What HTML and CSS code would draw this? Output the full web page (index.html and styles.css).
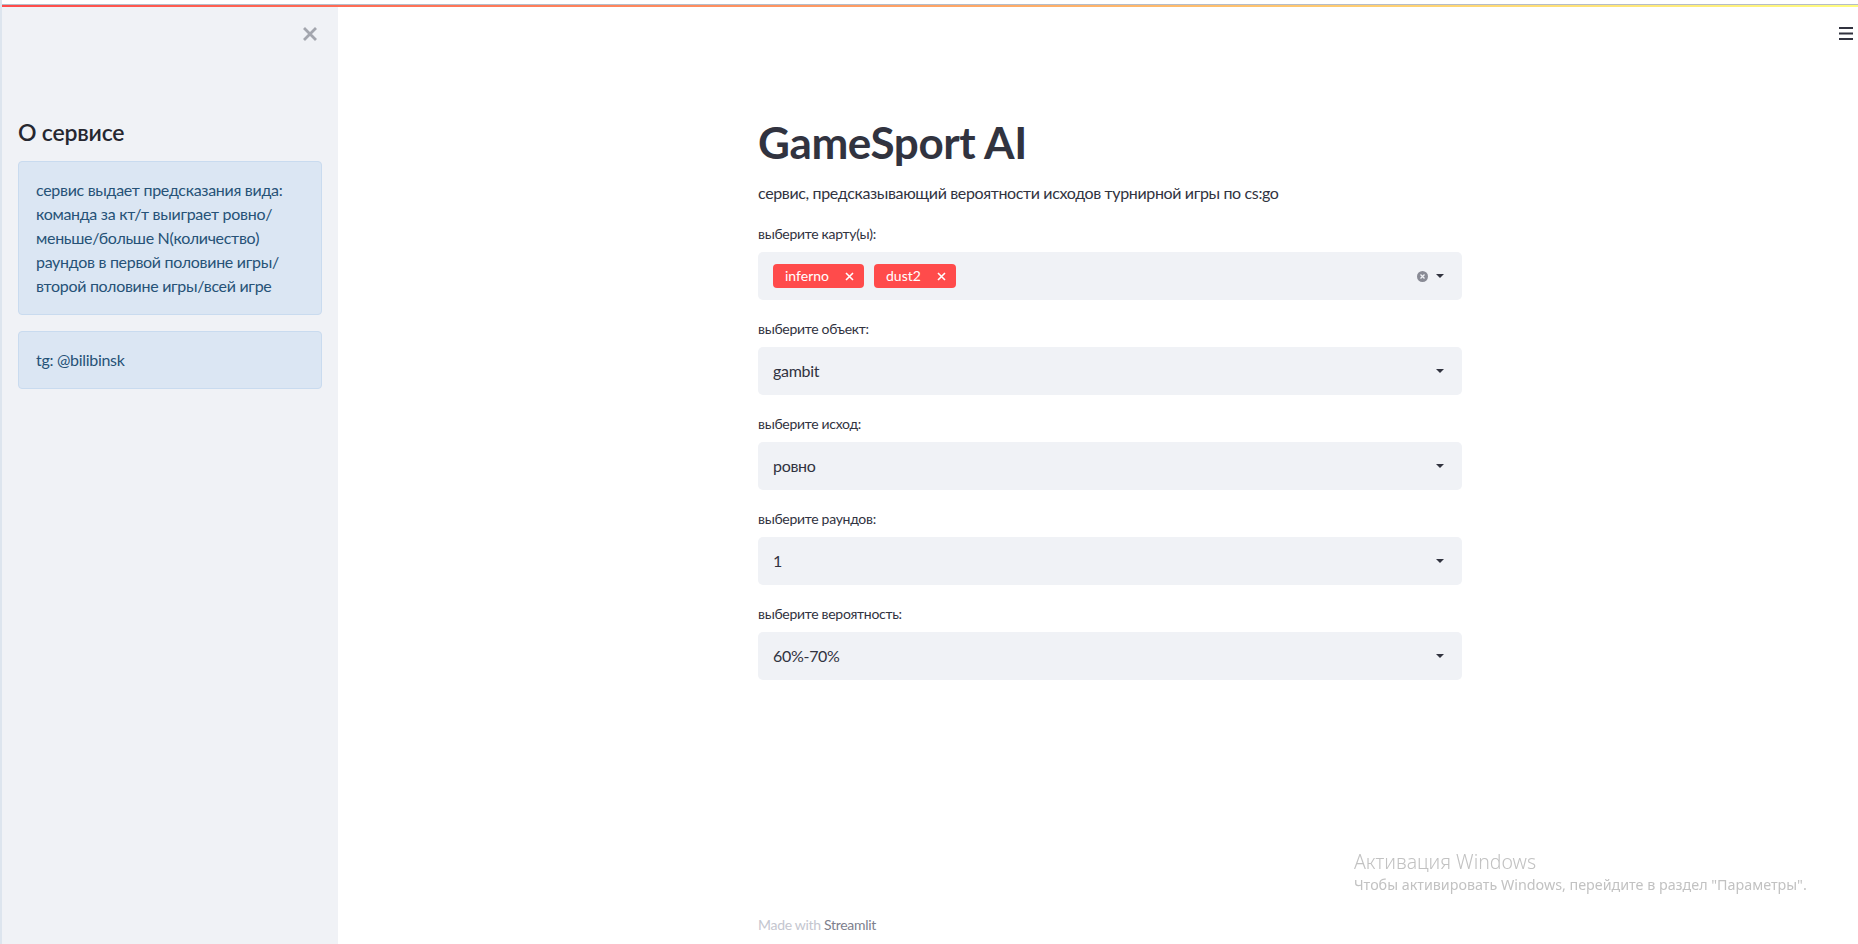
FILE: index.html
```html
<!DOCTYPE html>
<html lang="ru">
<head>
<meta charset="utf-8">
<title>GameSport AI</title>
<link rel="stylesheet" href="styles.css">
</head>
<body>
<div class="edge"></div>
<div class="page">
  <div class="chrome-top"></div>
  <div class="chrome-line"></div>
  <div class="decoration"></div>
  <div class="app">
    <aside class="sidebar">
      <div class="sb-top">
        <span class="close-btn">
          <svg width="14" height="14" viewBox="0 0 14 14"><path d="M2 2 L12 12 M12 2 L2 12" stroke="#a3a6ae" stroke-width="2.8" stroke-linecap="square"/></svg>
        </span>
      </div>
      <h2 class="sb-title">О сервисе</h2>
      <div class="info">сервис выдает предсказания вида: команда за кт/т выиграет ровно/ меньше/больше N(количество) раундов в первой половине игры/ второй половине игры/всей игре</div>
      <div class="info">tg: @bilibinsk</div>
    </aside>
    <main class="main">
      <header class="header">
        <span class="burger">
          <svg width="14" height="13" viewBox="0 0 14 13"><rect x="0" y="0" width="14" height="2" fill="#31333f"/><rect x="0" y="5.5" width="14" height="2" fill="#31333f"/><rect x="0" y="11" width="14" height="2" fill="#31333f"/></svg>
        </span>
      </header>
      <div class="block">
        <h1 class="title">GameSport AI</h1>
        <p class="sub">сервис, предсказывающий вероятности исходов турнирной игры по cs:go</p>

        <div class="widget">
          <label class="wlabel">выберите карту(ы):</label>
          <div class="select">
            <div class="value tags">
              <span class="tag">inferno<svg class="tag-x" width="9" height="9" viewBox="0 0 9 9"><path d="M1 1 L8 8 M8 1 L1 8" stroke="#ffffff" stroke-width="1.6"/></svg></span>
              <span class="tag">dust2<svg class="tag-x" width="9" height="9" viewBox="0 0 9 9"><path d="M1 1 L8 8 M8 1 L1 8" stroke="#ffffff" stroke-width="1.6"/></svg></span>
            </div>
            <span class="clear">
              <svg width="11" height="11" viewBox="0 0 11 11"><circle cx="5.5" cy="5.5" r="5.5" fill="#898b95"/><path d="M3.5 3.5 L7.5 7.5 M7.5 3.5 L3.5 7.5" stroke="#f0f2f6" stroke-width="1.3"/></svg>
            </span>
            <span class="caret"></span>
          </div>
        </div>

        <div class="widget">
          <label class="wlabel">выберите объект:</label>
          <div class="select">
            <div class="value">gambit</div>
            <span class="caret"></span>
          </div>
        </div>

        <div class="widget">
          <label class="wlabel">выберите исход:</label>
          <div class="select">
            <div class="value">ровно</div>
            <span class="caret"></span>
          </div>
        </div>

        <div class="widget">
          <label class="wlabel">выберите раундов:</label>
          <div class="select">
            <div class="value">1</div>
            <span class="caret"></span>
          </div>
        </div>

        <div class="widget">
          <label class="wlabel">выберите вероятность:</label>
          <div class="select">
            <div class="value">60%-70%</div>
            <span class="caret"></span>
          </div>
        </div>
      </div>
      <footer class="footer"><span class="made">Made with</span> <span class="brand">Streamlit</span></footer>
    </main>
  </div>
</div>
<div class="winact">
  <div class="wa1">Активация Windows</div>
  <div class="wa2">Чтобы активировать Windows, перейдите в раздел "Параметры".</div>
</div>
</body>
</html>
```

FILE: styles.css
```css
* { box-sizing: border-box; }

html, body {
  margin: 0;
  padding: 0;
  height: 100%;
}

body {
  display: flex;
  width: 1858px;
  height: 944px;
  overflow: hidden;
  font-family: "Lato", "Noto Sans", sans-serif;
  letter-spacing: -0.3px;
  color: #31333f;
  background: #ffffff;
}

.edge {
  width: 2px;
  flex: 0 0 2px;
  background: #dde5ee;
}

.page {
  flex: 1;
  display: flex;
  flex-direction: column;
  min-width: 0;
}

.chrome-top { height: 4px; background: #ffffff; }
.chrome-line { height: 1px; background: #b5bdc9; }
.decoration {
  height: 2px;
  background: linear-gradient(90deg, #ff4b4b, #fffd80);
}

.app {
  flex: 1;
  display: flex;
  min-height: 0;
}

/* Sidebar */
.sidebar {
  width: 336px;
  flex: 0 0 336px;
  background: #f0f2f6;
  padding: 0 16px;
  display: flex;
  flex-direction: column;
}

.sb-top {
  display: flex;
  justify-content: flex-end;
  padding-top: 20px;
  padding-right: 5px;
  height: 34px;
}

.close-btn { display: block; width: 14px; height: 14px; }
.close-btn svg { display: block; }

.sb-title {
  margin: 77px 0 0 0;
  font-size: 23px;
  line-height: 28px;
  font-weight: 600;
  color: #262730;
  letter-spacing: -0.2px;
}

.info {
  margin-top: 15px;
  background: #dbe6f3;
  border: 1px solid #c9dbef;
  border-radius: 4px;
  padding: 16px 17px;
  font-size: 16px;
  line-height: 24px;
  color: #265277;
}

.info + .info { margin-top: 16px; }

/* Main */
.main {
  flex: 1;
  display: flex;
  flex-direction: column;
  padding-left: 24px;
  min-width: 0;
}

.header {
  height: 46px;
  display: flex;
  justify-content: flex-end;
  align-items: flex-start;
  padding-top: 20px;
  padding-right: 5px;
}

.burger svg { display: block; }

.block {
  width: 704px;
  margin: 0 auto;
  padding-top: 63px;
}

.title {
  margin: 0;
  font-size: 44px;
  line-height: 52px;
  font-weight: 700;
  color: #31333f;
  letter-spacing: -0.4px;
}

.sub {
  margin: 12px 0 0 0;
  font-size: 16px;
  line-height: 26px;
  letter-spacing: -0.36px;
}

.widget {
  margin-top: 18px;
  display: flex;
  flex-direction: column;
}

.sub + .widget { margin-top: 17px; }

.wlabel {
  font-size: 14px;
  line-height: 22px;
  margin-bottom: 7px;
  color: #31333f;
}

.select {
  height: 48px;
  background: #f0f2f6;
  border-radius: 5px;
  display: flex;
  align-items: center;
  padding: 0 18px 0 15px;
}

.value {
  flex: 1;
  font-size: 16px;
  line-height: 20px;
  padding-bottom: 1px;
  color: #31333f;
}

.tags {
  display: flex;
  gap: 10px;
  padding-bottom: 0;
}

.tag {
  display: inline-flex;
  align-items: center;
  height: 24px;
  padding: 0 10px 0 12px;
  background: #ff4b4b;
  color: #ffffff;
  border-radius: 4px;
  font-size: 14px;
  letter-spacing: 0;
}

.tag-x {
  display: block;
  margin-left: 16px;
}

.clear {
  display: block;
  width: 11px;
  height: 11px;
  margin-right: 8px;
}
.clear svg { display: block; }

.caret {
  width: 0;
  height: 0;
  border-left: 4px solid transparent;
  border-right: 4px solid transparent;
  border-top: 4px solid #31333f;
}

.footer {
  margin: auto auto 0 auto;
  width: 704px;
  font-size: 14px;
  line-height: 20px;
  padding-bottom: 9px;
}

.made { color: #c4c6cf; }
.brand { color: #7d808d; }

/* Windows activation watermark (overlay) */
.winact {
  position: fixed;
  left: 1354px;
  top: 849px;
  color: #c2c2c2;
  font-family: "Noto Sans", "Open Sans", sans-serif;
  letter-spacing: 0;
  pointer-events: none;
}

.wa1 {
  font-size: 19.5px;
  line-height: 26px;
  font-weight: 300;
}

.wa2 {
  font-size: 14.3px;
  line-height: 20px;
}
```
